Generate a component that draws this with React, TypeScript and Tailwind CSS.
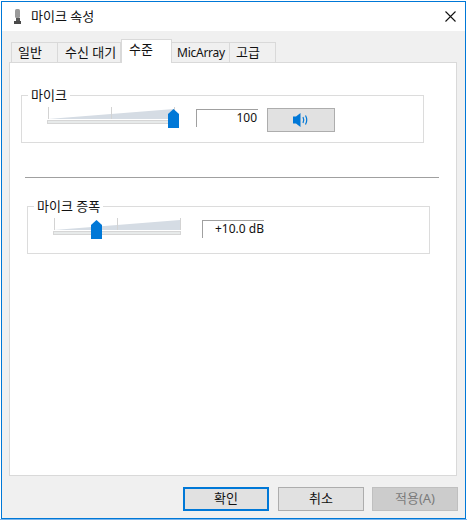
const FONT = "font-['Noto_Sans','Noto_Sans_CJK_KR',sans-serif]"

function Slider({ thumb }: { thumb: number }) {
  // track, wedge and ticks are one drawing, thumb x is relative to the svg
  return (
    <svg width="136" height="24" viewBox="0 0 136 24" className="shrink-0">
      <polygon points="1,14 127,4 127,14" fill="#d5dce4" />
      <line x1="1.5" y1="2" x2="1.5" y2="14" stroke="#d3d3d3" />
      <line x1="64.5" y1="2" x2="64.5" y2="14" stroke="#d3d3d3" />
      <line x1="127.5" y1="2" x2="127.5" y2="14" stroke="#d3d3d3" />
      <rect x="0.5" y="15.5" width="127" height="3" fill="#e7eaea" stroke="#d6d6d6" />
      <polygon
        points={`${thumb},9 ${thumb + 5.5},4 ${thumb + 11},9 ${thumb + 11},23 ${thumb},23`}
        fill="#0078d7"
      />
    </svg>
  )
}

function Group({ title, children, cls }: { title: string; children: React.ReactNode; cls: string }) {
  return (
    <div className={`relative h-[48px] w-[403px] border border-[#dcdcdc] ${cls}`}>
      <span className="absolute left-[6px] top-[-11px] bg-white px-[3px] text-[13px] leading-[20px] text-[#111]">{title}</span>
      {children}
    </div>
  )
}

function Tab({ label, cls }: { label: string; cls: string }) {
  return (
    <div className={`flex h-[20px] items-center border-t border-r border-[#d9d9d9] bg-[#f0f0f0] text-[#111] ${cls}`}>
      {label}
    </div>
  )
}

function Btn({ label, cls }: { label: string; cls: string }) {
  return (
    <div className={`flex h-[24px] w-[86px] items-center justify-center text-[13px] ${cls}`}>{label}</div>
  )
}

export default function App() {
  return (
    <div className={`flex h-[520px] w-[467px] flex-col overflow-hidden bg-white ${FONT}`}>
      <div className="ml-px mt-px flex h-[518px] w-[465px] flex-col border border-[#0078d7] bg-[#f0f0f0]">
        {/* title bar */}
        <div className="flex h-[29px] shrink-0 items-center bg-white pl-[11px] pr-[9px]">
          <svg width="14" height="16" viewBox="0 0 14 16" className="shrink-0">
            <rect x="2" y="0" width="5" height="9" rx="1.5" fill="#9a9a9a" />
            <rect x="3" y="9" width="4" height="3" fill="#555" />
            <rect x="1" y="12" width="7" height="3" fill="#4a4a4a" />
          </svg>
          <span className="ml-[4px] text-[13px] text-[#111]">마이크 속성</span>
          <svg width="11" height="11" viewBox="0 0 11 11" className="ml-auto">
            <path d="M0.5 0.5 L10.5 10.5 M10.5 0.5 L0.5 10.5" stroke="#111" strokeWidth="1.1" />
          </svg>
        </div>

        {/* tabs */}
        <div className="relative z-10 ml-[9px] mt-[8px] flex h-[23px] shrink-0 items-end">
          <Tab label="일반" cls="w-[47px] border-l pl-[6px] text-[13px]" />
          <Tab label="수신 대기" cls="w-[63px] pl-[7px] text-[13px]" />
          <div className="mb-[-1px] flex h-[24px] w-[51px] items-center border-x border-t border-[#d9d9d9] bg-white pb-[3px] pl-[7px] text-[13px] text-[#111]">
            수준
          </div>
          <Tab label="MicArray" cls="w-[58px] pl-[5px] text-[12px] tracking-[-0.25px]" />
          <Tab label="고급" cls="w-[46px] pl-[6px] text-[13px]" />
        </div>

        {/* panel */}
        <div className="ml-[7px] flex h-[414px] w-[448px] shrink-0 flex-col border border-[#d9d9d9] bg-white">
          <Group title="마이크" cls="ml-[11px] mt-[32px]">
            <div className="flex items-start pl-[25px] pt-[9px]">
              <Slider thumb={121} />
              <div className="ml-[13px] mt-[4px] h-[18px] w-[62px] border-l border-t border-[#a0a0a0] pr-px text-right text-[12px] leading-[15px] text-[#111]">
                100
              </div>
              <div className="ml-[9px] mt-[3px] flex h-[24px] w-[68px] items-center justify-center border border-[#adadad] bg-[#e1e1e1]">
                <svg width="16" height="14" viewBox="0 0 16 14">
                  <path d="M0 3.5 H3 L7.5 0 V14 L3 10.5 H0 Z" fill="#0078d7" />
                  <path d="M10 4 Q11.5 7 10 10" stroke="#0078d7" strokeWidth="1.2" fill="none" />
                  <path d="M12.5 2.5 Q15 7 12.5 11.5" stroke="#0078d7" strokeWidth="1.2" fill="none" />
                </svg>
              </div>
            </div>
          </Group>

          <div className="ml-[15px] mt-[34px] h-px w-[414px] bg-[#a0a0a0]" />

          <Group title="마이크 증폭" cls="ml-[17px] mt-[28px]">
            <div className="flex items-start pl-[25px] pt-[9px]">
              <Slider thumb={38} />
              <div className="ml-[13px] mt-[4px] h-[18px] w-[62px] border-l border-t border-[#a0a0a0] pl-[12px] text-[12px] leading-[15px] whitespace-nowrap text-[#111]">
                +10.0 dB
              </div>
            </div>
          </Group>
        </div>

        {/* footer buttons */}
        <div className="ml-[181px] mt-[11px] flex gap-[9px]">
          <Btn label="확인" cls="border-2 border-[#0078d7] bg-[#e1e1e1] text-[#111]" />
          <Btn label="취소" cls="border border-[#adadad] bg-[#e1e1e1] text-[#111]" />
          <Btn label="적용(A)" cls="ml-[-1px] border border-[#bfbfbf] bg-[#cccccc] text-[#7a7a7a]" />
        </div>
      </div>
      <div className="h-px bg-[#7db6ec]" />
    </div>
  )
}
